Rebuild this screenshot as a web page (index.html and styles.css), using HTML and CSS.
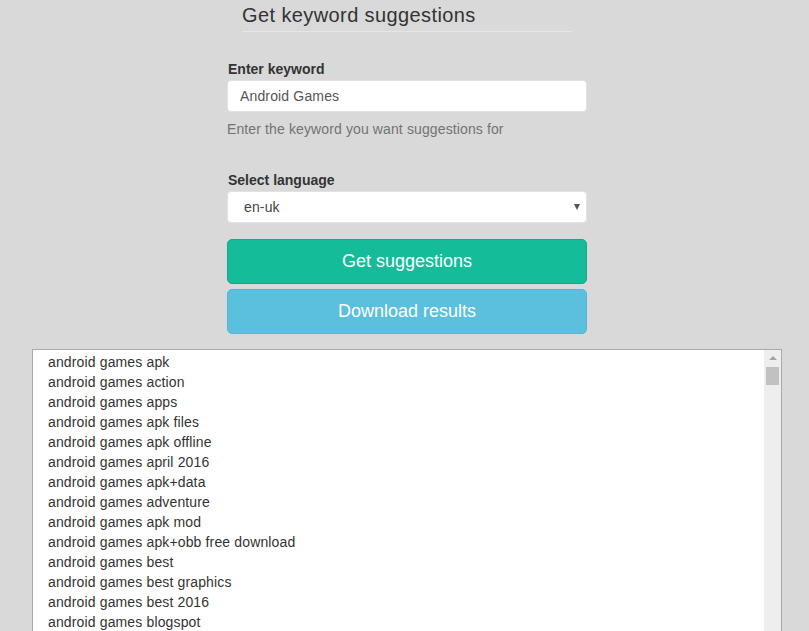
FILE: index.html
```html
<!DOCTYPE html>
<html>
<head>
<meta charset="utf-8">
<link rel="stylesheet" href="styles.css">
</head>
<body>
<div class="form">
  <h2 class="title">Get keyword suggestions</h2>
  <label class="lbl lbl-first">Enter keyword</label>
  <div class="field"><span class="field-text">Android Games</span></div>
  <p class="help">Enter the keyword you want suggestions for</p>
  <label class="lbl lbl-second">Select language</label>
  <div class="field select"><span class="select-text">en-uk</span><span class="caret"></span></div>
  <button class="btn btn-green">Get suggestions</button>
  <button class="btn btn-blue">Download results</button>
</div>
<div class="results">
  <ul class="list">
    <li>android games apk</li>
    <li>android games action</li>
    <li>android games apps</li>
    <li>android games apk files</li>
    <li>android games apk offline</li>
    <li>android games april 2016</li>
    <li>android games apk+data</li>
    <li>android games adventure</li>
    <li>android games apk mod</li>
    <li>android games apk+obb free download</li>
    <li>android games best</li>
    <li>android games best graphics</li>
    <li>android games best 2016</li>
    <li>android games blogspot</li>
  </ul>
  <div class="scrollbar">
    <div class="sb-arrow"><span class="sb-tri"></span></div>
    <div class="sb-thumb"></div>
  </div>
</div>
</body>
</html>
```
FILE: styles.css
```css
html, body {
  margin: 0;
  padding: 0;
  background: #d9d9d9;
  font-family: "Liberation Sans", Arial, sans-serif;
  color: #333;
  overflow: hidden;
}
.form {
  width: 360px;
  margin-left: 227px;
  display: flex;
  flex-direction: column;
}
.title {
  margin: 4px 15px 0;
  padding: 0 0 5px;
  font-size: 20px;
  line-height: 22px;
  font-weight: normal;
  letter-spacing: 0.4px;
  color: #333;
  border-bottom: 1px solid #e6e6e6;
}
.lbl {
  display: block;
  font-size: 14px;
  font-weight: bold;
  line-height: 20px;
  margin-bottom: 1px;
  padding-left: 1px;
}
.lbl-first { margin-top: 27px; }
.lbl-second { margin-top: 31px; }
.field {
  box-sizing: border-box;
  height: 32px;
  background: #fff;
  border: 1px solid #e2e2e2;
  border-radius: 4px;
  display: flex;
  align-items: center;
  font-size: 14px;
  color: #555;
}
.field-text { padding-left: 12px; letter-spacing: 0.15px; }
.select { justify-content: space-between; }
.select-text { padding-left: 16px; color: #444; letter-spacing: 0.15px; }
.caret {
  width: 0;
  height: 0;
  border-left: 3.5px solid transparent;
  border-right: 3.5px solid transparent;
  border-top: 6px solid #555;
  margin-right: 6px;
}
.help {
  margin: 7px 0 0;
  font-size: 14px;
  line-height: 20px;
  letter-spacing: 0.12px;
  color: #737373;
}
.btn {
  box-sizing: border-box;
  height: 45px;
  border-radius: 5px;
  font-family: "Liberation Sans", Arial, sans-serif;
  font-size: 18px;
  color: #fff;
  padding: 0;
  cursor: pointer;
}
.btn-green {
  margin-top: 16px;
  background: #14bc9a;
  border: 1px solid #11a98a;
}
.btn-blue {
  margin-top: 5px;
  background: #5bc0de;
  border: 1px solid #4fb8d8;
}
.results {
  margin: 15px 27px 0 32px;
  height: 290px;
  background: #fff;
  border: 1px solid #a9a9a9;
  display: flex;
}
.list {
  flex: 1;
  list-style: none;
  margin: 0;
  padding: 2px 0 0 15px;
  font-size: 14px;
  line-height: 20px;
  letter-spacing: 0.14px;
  color: #333;
  overflow: hidden;
}
.scrollbar {
  width: 17px;
  background: #eeeeee;
  display: flex;
  flex-direction: column;
  align-items: center;
}
.sb-arrow {
  height: 17px;
  width: 100%;
  display: flex;
  align-items: center;
  justify-content: center;
}
.sb-tri {
  width: 0;
  height: 0;
  border-left: 4px solid transparent;
  border-right: 4px solid transparent;
  border-bottom: 4px solid #a3a3a3;
  margin-top: -2px;
}
.sb-thumb {
  width: 13px;
  height: 18px;
  background: #c1c1c1;
}
```
